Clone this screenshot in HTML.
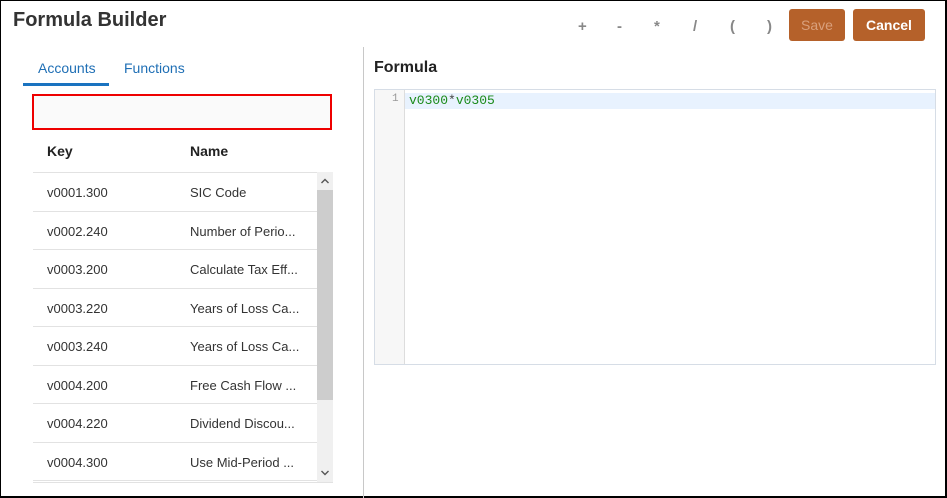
<!DOCTYPE html>
<html><head><style>
*{margin:0;padding:0;box-sizing:border-box}
body{width:947px;height:498px;position:relative;font-family:"Liberation Sans",sans-serif;background:#fff;overflow:hidden}
#frame{position:absolute;left:0;top:0;width:947px;height:498px;border:1px solid #000;border-right:2px solid #000;border-bottom:2px solid #000}
.a{position:absolute}
h1{position:absolute;left:13px;top:9px;font:bold 20px "Liberation Sans",sans-serif;color:#333}
.op{position:absolute;top:18px;font:bold 15px "Liberation Sans",sans-serif;color:#888}
.btn{position:absolute;top:9px;height:32px;background:#b5612a;border-radius:3px;font:14px "Liberation Sans",sans-serif;text-align:center;line-height:32px}
.row{position:absolute;left:33px;width:284px;height:38.5px;border-top:1px solid #e2e2e2;font-size:13px;color:#333;font-family:"Liberation Sans",sans-serif}
.row span{position:absolute;top:12px}
</style></head><body>
<div id="frame"></div>
<h1>Formula Builder</h1>
<div class="op" style="left:578px">+</div>
<div class="op" style="left:617px">-</div>
<div class="op" style="left:654px">*</div>
<div class="op" style="left:693px">/</div>
<div class="op" style="left:730px">(</div>
<div class="op" style="left:767px">)</div>
<div class="btn" style="left:789px;width:56px;color:#d9a07c">Save</div>
<div class="btn" style="left:853px;width:72px;color:#fff;font-weight:bold">Cancel</div>

<div class="a" style="left:363px;top:47px;width:1px;height:451px;background:#c8c8c8"></div>

<div class="a" style="left:38px;top:60px;font:14px 'Liberation Sans',sans-serif;color:#1f6fb5">Accounts</div>
<div class="a" style="left:124px;top:60px;font:14px 'Liberation Sans',sans-serif;color:#1f6fb5">Functions</div>
<div class="a" style="left:23px;top:83px;width:86px;height:3px;background:#1a73c0"></div>
<div class="a" style="left:32px;top:94px;width:300px;height:36px;border:2px solid #e00;background:#fafafa"></div>

<div class="a" style="left:47px;top:143px;font:bold 14px 'Liberation Sans',sans-serif;color:#222">Key</div>
<div class="a" style="left:190px;top:143px;font:bold 14px 'Liberation Sans',sans-serif;color:#222">Name</div>

<div class="row" style="top:172px"><span style="left:14px">v0001.300</span><span style="left:157px">SIC Code</span></div>
<div class="row" style="top:210.5px"><span style="left:14px">v0002.240</span><span style="left:157px">Number of Perio...</span></div>
<div class="row" style="top:249px"><span style="left:14px">v0003.200</span><span style="left:157px">Calculate Tax Eff...</span></div>
<div class="row" style="top:287.5px"><span style="left:14px">v0003.220</span><span style="left:157px">Years of Loss Ca...</span></div>
<div class="row" style="top:326px"><span style="left:14px">v0003.240</span><span style="left:157px">Years of Loss Ca...</span></div>
<div class="row" style="top:364.5px"><span style="left:14px">v0004.200</span><span style="left:157px">Free Cash Flow ...</span></div>
<div class="row" style="top:403px"><span style="left:14px">v0004.220</span><span style="left:157px">Dividend Discou...</span></div>
<div class="row" style="top:441.5px"><span style="left:14px">v0004.300</span><span style="left:157px">Use Mid-Period ...</span></div>
<div class="a" style="left:33px;top:480px;width:284px;height:1px;background:#e2e2e2"></div>
<div class="a" style="left:33px;top:482px;width:300px;height:1px;background:#e2e2e2"></div>

<div class="a" style="left:317px;top:172px;width:16px;height:310px;background:#f0f0f0"></div>
<div class="a" style="left:317px;top:190px;width:16px;height:210px;background:#cdcdcd"></div>
<svg class="a" style="left:317px;top:174px" width="16" height="14"><path d="M4.5 9 L8 5.5 L11.5 9" stroke="#555" stroke-width="1.4" fill="none"/></svg>
<svg class="a" style="left:317px;top:466px" width="16" height="14"><path d="M4.5 5 L8 8.5 L11.5 5" stroke="#555" stroke-width="1.4" fill="none"/></svg>

<div class="a" style="left:374px;top:59px;font:bold 16px 'Liberation Sans',sans-serif;color:#222">Formula</div>
<div class="a" style="left:374px;top:89px;width:562px;height:276px;border:1px solid #d6dde6;background:#fff"></div>
<div class="a" style="left:375px;top:90px;width:30px;height:274px;background:#f7f7f7;border-right:1px solid #ddd"></div>
<div class="a" style="left:405px;top:93px;width:530px;height:16px;background:#e8f2fe"></div>
<div class="a" style="left:392px;top:93px;font:11px 'Liberation Mono',monospace;color:#999">1</div>
<div class="a" style="left:409px;top:93px;font:13px 'Liberation Mono',monospace;color:#1a8a1a">v0300<span style="color:#444">*</span>v0305</div>
</body></html>
